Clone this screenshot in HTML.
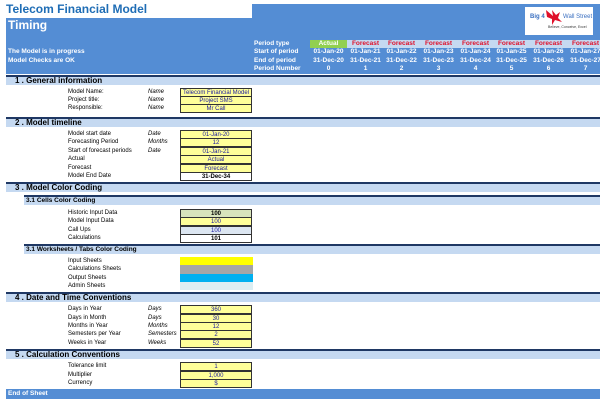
<!DOCTYPE html><html><head><style>
*{margin:0;padding:0;box-sizing:border-box}
body{width:600px;height:404px;background:#fff;position:relative;overflow:hidden;font-family:"Liberation Sans",Arial,sans-serif}
div{position:absolute;white-space:nowrap}
.t{font-size:6px;color:#000;line-height:8px}
.i{font-style:italic}
.sec{left:6px;width:594px;height:10px;background:#c5d9f1;border-top:2px solid #1f3864;font-size:8px;font-weight:bold;color:#000;line-height:8px;padding-left:9px}
.sub{left:24px;width:576px;height:10px;background:#c5d9f1;border-top:2px solid #1f3864;font-size:6.5px;font-weight:bold;line-height:8px;padding-left:2px}
.c{left:180px;width:72px;height:9px;background:#ffff99;border:1px solid #333;font-size:6px;text-align:center;color:#1a1aa0;line-height:8px}
.hd{font-size:6.5px;font-weight:bold;color:#fff;line-height:8px}
.col{width:37px;text-align:center;font-size:6.5px;font-weight:bold;color:#fff;line-height:8px}
</style></head><body>
<div style="left:6px;top:2px;font-size:12px;font-weight:bold;color:#1f6db5">Telecom Financial Model</div>
<div style="left:252px;top:4px;width:348px;height:14px;background:#548dd4"></div>
<div style="left:6px;top:18px;width:594px;height:56px;background:#548dd4"></div>
<div style="left:8px;top:18px;font-size:12px;font-weight:bold;color:#fff">Timing</div>
<div class="hd" style="left:8px;top:48px">The Model is in progress</div>
<div class="hd" style="left:8px;top:57px">Model Checks are OK</div>
<div class="hd" style="left:254px;top:40px">Period type</div>
<div class="hd" style="left:254px;top:48px">Start of period</div>
<div class="hd" style="left:254px;top:57px">End of period</div>
<div class="hd" style="left:254px;top:65px">Period Number</div>
<div style="left:310px;top:40px;width:290px;height:8px;background:#c5d9f1"></div>
<div style="left:310px;top:40px;width:37px;height:8px;background:#92d050"></div>
<div class="col" style="left:310px;top:40px">Actual</div>
<div class="col" style="left:347px;top:40px;color:#e0102a">Forecast</div>
<div class="col" style="left:383px;top:40px;color:#e0102a">Forecast</div>
<div class="col" style="left:420px;top:40px;color:#e0102a">Forecast</div>
<div class="col" style="left:457px;top:40px;color:#e0102a">Forecast</div>
<div class="col" style="left:493px;top:40px;color:#e0102a">Forecast</div>
<div class="col" style="left:530px;top:40px;color:#e0102a">Forecast</div>
<div class="col" style="left:567px;top:40px;color:#e0102a">Forecast</div>
<div class="col" style="left:310px;top:48px">01-Jan-20</div><div class="col" style="left:347px;top:48px">01-Jan-21</div><div class="col" style="left:383px;top:48px">01-Jan-22</div><div class="col" style="left:420px;top:48px">01-Jan-23</div><div class="col" style="left:457px;top:48px">01-Jan-24</div><div class="col" style="left:493px;top:48px">01-Jan-25</div><div class="col" style="left:530px;top:48px">01-Jan-26</div><div class="col" style="left:567px;top:48px">01-Jan-27</div>
<div class="col" style="left:310px;top:57px">31-Dec-20</div><div class="col" style="left:347px;top:57px">31-Dec-21</div><div class="col" style="left:383px;top:57px">31-Dec-22</div><div class="col" style="left:420px;top:57px">31-Dec-23</div><div class="col" style="left:457px;top:57px">31-Dec-24</div><div class="col" style="left:493px;top:57px">31-Dec-25</div><div class="col" style="left:530px;top:57px">31-Dec-26</div><div class="col" style="left:567px;top:57px">31-Dec-27</div>
<div class="col" style="left:310px;top:65px">0</div><div class="col" style="left:347px;top:65px">1</div><div class="col" style="left:383px;top:65px">2</div><div class="col" style="left:420px;top:65px">3</div><div class="col" style="left:457px;top:65px">4</div><div class="col" style="left:493px;top:65px">5</div><div class="col" style="left:530px;top:65px">6</div><div class="col" style="left:567px;top:65px">7</div>
<div style="left:525px;top:7px;width:68px;height:28px;background:#fff"></div>
<div style="left:530px;top:14px;font-size:6px;color:#3a6fc0;font-weight:bold">Big 4</div>
<div style="left:563px;top:14px;font-size:6px;color:#3a6fc0">Wall Street</div>
<svg style="position:absolute;left:544px;top:8px" width="20" height="18" viewBox="0 0 20 18"><path d="M2 2 L9 8 L8 2 L12 7 L16 4 L14 10 L18 14 L11 12 L8 17 L8 11 L3 9 Z" fill="#e0102a"/></svg>
<div style="left:548px;top:25px;font-size:3.5px;color:#333">Believe, Conceive, Excel</div>

<div class="sec" style="top:75px">1 . General information</div>
<div class="t" style="left:68px;top:88px">Model Name:</div><div class="t i" style="left:148px;top:88px">Name</div><div class="c" style="top:88px">Telecom Financial Model</div>
<div class="t" style="left:68px;top:96px">Project title:</div><div class="t i" style="left:148px;top:96px">Name</div><div class="c" style="top:96px">Project SMS</div>
<div class="t" style="left:68px;top:104px">Responsible:</div><div class="t i" style="left:148px;top:104px">Name</div><div class="c" style="top:104px">Mr Call</div>

<div class="sec" style="top:117px">2 . Model timeline</div>
<div class="t" style="left:68px;top:130px">Model start date</div><div class="t i" style="left:148px;top:130px">Date</div><div class="c" style="top:130px">01-Jan-20</div>
<div class="t" style="left:68px;top:138px">Forecasting Period</div><div class="t i" style="left:148px;top:138px">Months</div><div class="c" style="top:138px">12</div>
<div class="t" style="left:68px;top:147px">Start of forecast periods</div><div class="t i" style="left:148px;top:147px">Date</div><div class="c" style="top:147px">01-Jan-21</div>
<div class="t" style="left:68px;top:155px">Actual</div><div class="c" style="top:155px">Actual</div>
<div class="t" style="left:68px;top:164px">Forecast</div><div class="c" style="top:164px">Forecast</div>
<div class="t" style="left:68px;top:172px">Model End Date</div><div class="c" style="top:172px;background:#fff;color:#000;font-weight:bold">31-Dec-34</div>

<div class="sec" style="top:182px">3 . Model Color Coding</div>
<div class="sub" style="top:195px">3.1 Cells Color Coding</div>
<div class="t" style="left:68px;top:209px">Historic Input Data</div><div class="c" style="top:209px;background:#d8e4bc;color:#000;font-weight:bold">100</div>
<div class="t" style="left:68px;top:217px">Model Input Data</div><div class="c" style="top:217px">100</div>
<div class="t" style="left:68px;top:226px">Call Ups</div><div class="c" style="top:226px;background:#dce6f1">100</div>
<div class="t" style="left:68px;top:234px">Calculations</div><div class="c" style="top:234px;background:#fff;color:#000;font-weight:bold">101</div>
<div class="sub" style="top:244px">3.1 Worksheets / Tabs Color Coding</div>
<div class="t" style="left:68px;top:257px">Input Sheets</div><div style="left:180px;top:257px;width:73px;height:8px;background:#ffff00"></div>
<div class="t" style="left:68px;top:265px">Calculations Sheets</div><div style="left:180px;top:265px;width:73px;height:9px;background:#a6a6a6"></div>
<div class="t" style="left:68px;top:274px">Output Sheets</div><div style="left:180px;top:274px;width:73px;height:8px;background:#00b0f0"></div>
<div class="t" style="left:68px;top:282px">Admin Sheets</div><div style="left:180px;top:282px;width:73px;height:8px;background:#dbeef3"></div>

<div class="sec" style="top:292px">4 . Date and Time Conventions</div>
<div class="t" style="left:68px;top:305px">Days in Year</div><div class="t i" style="left:148px;top:305px">Days</div><div class="c" style="top:305px">360</div>
<div class="t" style="left:68px;top:314px">Days in Month</div><div class="t i" style="left:148px;top:314px">Days</div><div class="c" style="top:314px">30</div>
<div class="t" style="left:68px;top:322px">Months in Year</div><div class="t i" style="left:148px;top:322px">Months</div><div class="c" style="top:322px">12</div>
<div class="t" style="left:68px;top:330px">Semesters per Year</div><div class="t i" style="left:148px;top:330px">Semesters</div><div class="c" style="top:330px">2</div>
<div class="t" style="left:68px;top:339px">Weeks in Year</div><div class="t i" style="left:148px;top:339px">Weeks</div><div class="c" style="top:339px">52</div>

<div class="sec" style="top:349px">5 . Calculation Conventions</div>
<div class="t" style="left:68px;top:362px">Tolerance limit</div><div class="c" style="top:362px">1</div>
<div class="t" style="left:68px;top:371px">Multiplier</div><div class="c" style="top:371px">1,000</div>
<div class="t" style="left:68px;top:379px">Currency</div><div class="c" style="top:379px">$</div>

<div style="left:6px;top:389px;width:594px;height:10px;background:#548dd4;font-size:6.5px;font-weight:bold;color:#fff;line-height:10px;padding-left:2px">End of Sheet</div>
</body></html>
